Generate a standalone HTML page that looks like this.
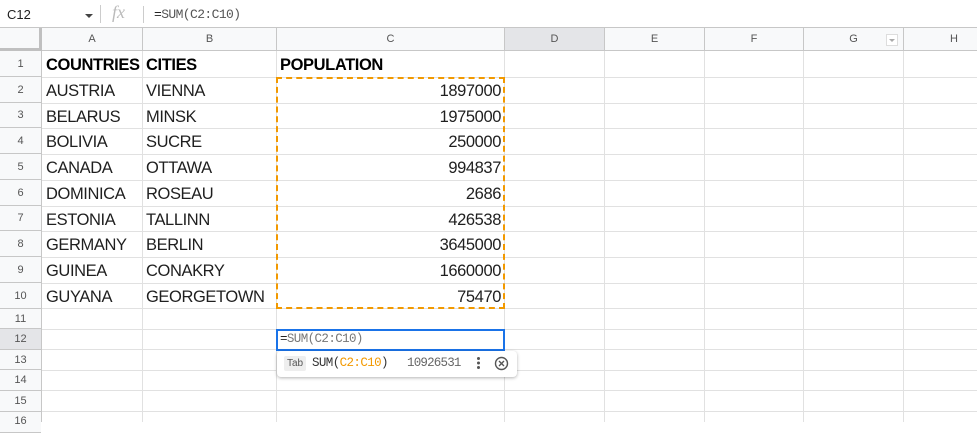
<!DOCTYPE html>
<html><head><meta charset="utf-8"><style>
*{margin:0;padding:0;box-sizing:border-box}
body{width:977px;height:422px;overflow:hidden;background:#fff;font-family:"Liberation Sans",Arial,sans-serif;position:relative}
.a{position:absolute}
.hl{position:absolute;background:#e1e1e1}
.ch{position:absolute;top:28px;height:22px;font-size:11px;color:#555;text-align:center;line-height:22px;background:#f8f9fa;border-right:1px solid #c7c7c7}
.rh{position:absolute;left:0;width:41px;font-size:11px;color:#555;text-align:center;background:#f8f9fa;border-bottom:1px solid #c7c7c7}
.t{position:absolute;font-size:16.5px;letter-spacing:-0.4px;color:#1f1f1f;white-space:nowrap;line-height:28px}
.b{font-weight:bold;color:#000}
.r{text-align:right}
</style></head><body>
<div class="a" style="left:0;top:0;width:977px;height:28px;border-bottom:1px solid #c7c7c7"></div>
<div class="a" style="left:7px;top:7px;font-size:13px;color:#1f1f1f">C12</div>
<div class="a" style="left:85px;top:14px;width:0;height:0;border-left:4px solid transparent;border-right:4px solid transparent;border-top:4px solid #444"></div>
<div class="a" style="left:100px;top:5px;width:1px;height:18px;background:#ccc"></div>
<div class="a" style="left:112px;top:2px;font-size:18px;font-style:italic;color:#bbb;font-family:'Liberation Serif',serif">fx</div>
<div class="a" style="left:143px;top:6px;width:1px;height:17px;background:#ccc"></div>
<div class="a" style="left:154px;top:7px;font-size:13px;color:#555;font-family:'Liberation Mono',monospace;letter-spacing:-0.6px"><span style="color:#222">=</span>SUM(C2:C10)</div>
<div class="a" style="left:0;top:28px;width:977px;height:23px;background:#f8f9fa;border-bottom:1px solid #c7c7c7"></div>
<div class="a" style="left:0;top:28px;width:42px;height:23px;background:#f8f9fa;border-right:3px solid #c0c0c0;border-bottom:3px solid #c0c0c0"></div>
<div class="ch" style="left:42px;width:101px">A</div>
<div class="ch" style="left:143px;width:134px">B</div>
<div class="ch" style="left:277px;width:228px">C</div>
<div class="ch" style="left:505px;width:100px;background:#e4e5e8">D</div>
<div class="ch" style="left:605px;width:100px">E</div>
<div class="ch" style="left:705px;width:99px">F</div>
<div class="ch" style="left:804px;width:100px">G</div>
<div class="a" style="left:886px;top:34px;width:12px;height:12px;border:1px solid #ddd;background:#fff"></div>
<div class="a" style="left:889px;top:39px;border-left:3px solid transparent;border-right:3px solid transparent;border-top:3px solid #aaa"></div>
<div class="ch" style="left:904px;width:100px;border-right:none">H</div>
<div class="a" style="left:0;top:51px;width:42px;height:371px;background:#f8f9fa;border-right:1px solid #c7c7c7"></div>
<div class="hl" style="left:142px;top:51px;width:1px;height:371px"></div>
<div class="hl" style="left:276px;top:51px;width:1px;height:371px"></div>
<div class="hl" style="left:504px;top:51px;width:1px;height:371px"></div>
<div class="hl" style="left:604px;top:51px;width:1px;height:371px"></div>
<div class="hl" style="left:704px;top:51px;width:1px;height:371px"></div>
<div class="hl" style="left:803px;top:51px;width:1px;height:371px"></div>
<div class="hl" style="left:903px;top:51px;width:1px;height:371px"></div>
<div class="hl" style="left:42px;top:77px;width:935px;height:1px"></div>
<div class="hl" style="left:42px;top:103px;width:935px;height:1px"></div>
<div class="hl" style="left:42px;top:128px;width:935px;height:1px"></div>
<div class="hl" style="left:42px;top:154px;width:935px;height:1px"></div>
<div class="hl" style="left:42px;top:180px;width:935px;height:1px"></div>
<div class="hl" style="left:42px;top:206px;width:935px;height:1px"></div>
<div class="hl" style="left:42px;top:231px;width:935px;height:1px"></div>
<div class="hl" style="left:42px;top:257px;width:935px;height:1px"></div>
<div class="hl" style="left:42px;top:283px;width:935px;height:1px"></div>
<div class="hl" style="left:42px;top:308px;width:935px;height:1px"></div>
<div class="hl" style="left:42px;top:329px;width:935px;height:1px"></div>
<div class="hl" style="left:42px;top:349px;width:935px;height:1px"></div>
<div class="hl" style="left:42px;top:370px;width:935px;height:1px"></div>
<div class="hl" style="left:42px;top:390px;width:935px;height:1px"></div>
<div class="hl" style="left:42px;top:411px;width:935px;height:1px"></div>
<div class="rh" style="top:51px;height:26px;line-height:26px">1</div>
<div class="rh" style="top:77px;height:26px;line-height:26px">2</div>
<div class="rh" style="top:103px;height:25px;line-height:25px">3</div>
<div class="rh" style="top:128px;height:26px;line-height:26px">4</div>
<div class="rh" style="top:154px;height:26px;line-height:26px">5</div>
<div class="rh" style="top:180px;height:26px;line-height:26px">6</div>
<div class="rh" style="top:206px;height:25px;line-height:25px">7</div>
<div class="rh" style="top:231px;height:26px;line-height:26px">8</div>
<div class="rh" style="top:257px;height:26px;line-height:26px">9</div>
<div class="rh" style="top:283px;height:26px;line-height:26px">10</div>
<div class="rh" style="top:309px;height:20px;line-height:20px">11</div>
<div class="rh" style="top:329px;height:21px;line-height:21px;background:#e4e5e8">12</div>
<div class="rh" style="top:350px;height:20px;line-height:20px">13</div>
<div class="rh" style="top:370px;height:21px;line-height:21px">14</div>
<div class="rh" style="top:391px;height:21px;line-height:21px">15</div>
<div class="rh" style="top:412px;height:21px;line-height:18px">16</div>
<div class="t b" style="left:46px;top:51px;width:96px;overflow:hidden">COUNTRIES</div>
<div class="t b" style="left:146px;top:51px">CITIES</div>
<div class="t b" style="left:280px;top:51px">POPULATION</div>
<div class="t" style="left:46px;top:77px">AUSTRIA</div><div class="t" style="left:146px;top:77px">VIENNA</div><div class="t r" style="left:280px;top:77px;width:221px">1897000</div>
<div class="t" style="left:46px;top:103px">BELARUS</div><div class="t" style="left:146px;top:103px">MINSK</div><div class="t r" style="left:280px;top:103px;width:221px">1975000</div>
<div class="t" style="left:46px;top:128px">BOLIVIA</div><div class="t" style="left:146px;top:128px">SUCRE</div><div class="t r" style="left:280px;top:128px;width:221px">250000</div>
<div class="t" style="left:46px;top:154px">CANADA</div><div class="t" style="left:146px;top:154px">OTTAWA</div><div class="t r" style="left:280px;top:154px;width:221px">994837</div>
<div class="t" style="left:46px;top:180px">DOMINICA</div><div class="t" style="left:146px;top:180px">ROSEAU</div><div class="t r" style="left:280px;top:180px;width:221px">2686</div>
<div class="t" style="left:46px;top:206px">ESTONIA</div><div class="t" style="left:146px;top:206px">TALLINN</div><div class="t r" style="left:280px;top:206px;width:221px">426538</div>
<div class="t" style="left:46px;top:231px">GERMANY</div><div class="t" style="left:146px;top:231px">BERLIN</div><div class="t r" style="left:280px;top:231px;width:221px">3645000</div>
<div class="t" style="left:46px;top:257px">GUINEA</div><div class="t" style="left:146px;top:257px">CONAKRY</div><div class="t r" style="left:280px;top:257px;width:221px">1660000</div>
<div class="t" style="left:46px;top:283px">GUYANA</div><div class="t" style="left:146px;top:283px">GEORGETOWN</div><div class="t r" style="left:280px;top:283px;width:221px">75470</div>
<div class="a" style="left:276px;top:77px;width:229px;height:232px;border:2px dashed #f29900"></div>
<div class="a" style="left:276px;top:329px;width:229px;height:22px;border:2px solid #1a73e8;background:#fff"></div>
<div class="a" style="left:280px;top:332px;font-size:12.5px;color:#777;font-family:'Liberation Mono',monospace;letter-spacing:-0.6px"><span style="color:#222">=</span>SUM(C2:C10)</div>
<div class="a" style="left:277px;top:351px;width:240px;height:26px;background:#fff;border-radius:4px;box-shadow:0 1px 3px rgba(0,0,0,.3)"></div>
<div class="a" style="left:284px;top:356px;height:15px;padding:0 3px;background:#eee;border-radius:2px;font-size:10px;color:#555;line-height:15px">Tab</div>
<div class="a" style="left:312px;top:356px;font-size:12.5px;color:#333;font-family:'Liberation Mono',monospace;letter-spacing:-0.6px">SUM(<span style="color:#f29900">C2:C10</span>)</div>
<div class="a" style="left:407px;top:356px;font-size:12.5px;color:#666;font-family:'Liberation Mono',monospace;letter-spacing:-0.8px">10926531</div>
<div class="a" style="left:477px;top:357px;width:3px;height:3px;border-radius:50%;background:#555;box-shadow:0 4.5px 0 #555,0 9px 0 #555"></div>
<svg class="a" style="left:494px;top:356px" width="15" height="15" viewBox="0 0 15 15"><circle cx="7.5" cy="7.5" r="6" fill="none" stroke="#555" stroke-width="1.4"/><path d="M5 5L10 10M10 5L5 10" stroke="#555" stroke-width="1.4"/></svg>
</body></html>
